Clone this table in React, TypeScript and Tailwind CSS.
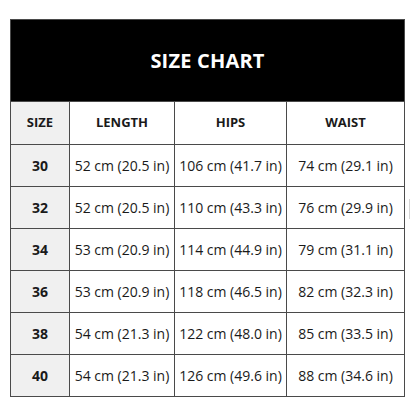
const rows = [
  ["30", "52 cm (20.5 in)", "106 cm (41.7 in)", "74 cm (29.1 in)"],
  ["32", "52 cm (20.5 in)", "110 cm (43.3 in)", "76 cm (29.9 in)"],
  ["34", "53 cm (20.9 in)", "114 cm (44.9 in)", "79 cm (31.1 in)"],
  ["36", "53 cm (20.9 in)", "118 cm (46.5 in)", "82 cm (32.3 in)"],
  ["38", "54 cm (21.3 in)", "122 cm (48.0 in)", "85 cm (33.5 in)"],
  ["40", "54 cm (21.3 in)", "126 cm (49.6 in)", "88 cm (34.6 in)"],
];

const cols = "grid grid-cols-[59px_105px_112px_118px]";

export default function App() {
  return (
    <div className="relative w-[416px] h-[416px] bg-white pt-[19px] pl-[10px] font-['Open_Sans',sans-serif] text-[#1a1a1a]">
      <div className="w-[395px] border-l border-t border-[#4a4a4a]">
        <div className="h-[82px] bg-black border-r border-b border-[#4a4a4a] flex items-center justify-center">
          <span className="text-white font-bold text-[20px] tracking-[0.2px]">SIZE CHART</span>
        </div>
        <div className={`${cols} h-[43px]`}>
          <div className="bg-[#f0f0f0] border-r border-b border-[#4a4a4a] flex items-center justify-center font-bold text-[13px]">SIZE</div>
          <div className="border-r border-b border-[#4a4a4a] flex items-center justify-center font-bold text-[13px]">LENGTH</div>
          <div className="border-r border-b border-[#4a4a4a] flex items-center justify-center font-bold text-[13px]">HIPS</div>
          <div className="border-r border-b border-[#4a4a4a] flex items-center justify-center font-bold text-[13px]">WAIST</div>
        </div>
        {rows.map((r) => (
          <div key={r[0]} className={`${cols} h-[42px]`}>
            <div className="bg-[#f0f0f0] border-r border-b border-[#4a4a4a] flex items-center justify-center font-bold text-[14px]">{r[0]}</div>
            <div className="border-r border-b border-[#4a4a4a] flex items-center justify-center text-[14px]">{r[1]}</div>
            <div className="border-r border-b border-[#4a4a4a] flex items-center justify-center text-[14px]">{r[2]}</div>
            <div className="border-r border-b border-[#4a4a4a] flex items-center justify-center text-[14px]">{r[3]}</div>
          </div>
        ))}
      </div>
      {/* stray scan mark at the right edge */}
      <div className="absolute left-[409px] top-[199px] w-[1px] h-[20px] bg-[#d4d4d4]" />
    </div>
  );
}
